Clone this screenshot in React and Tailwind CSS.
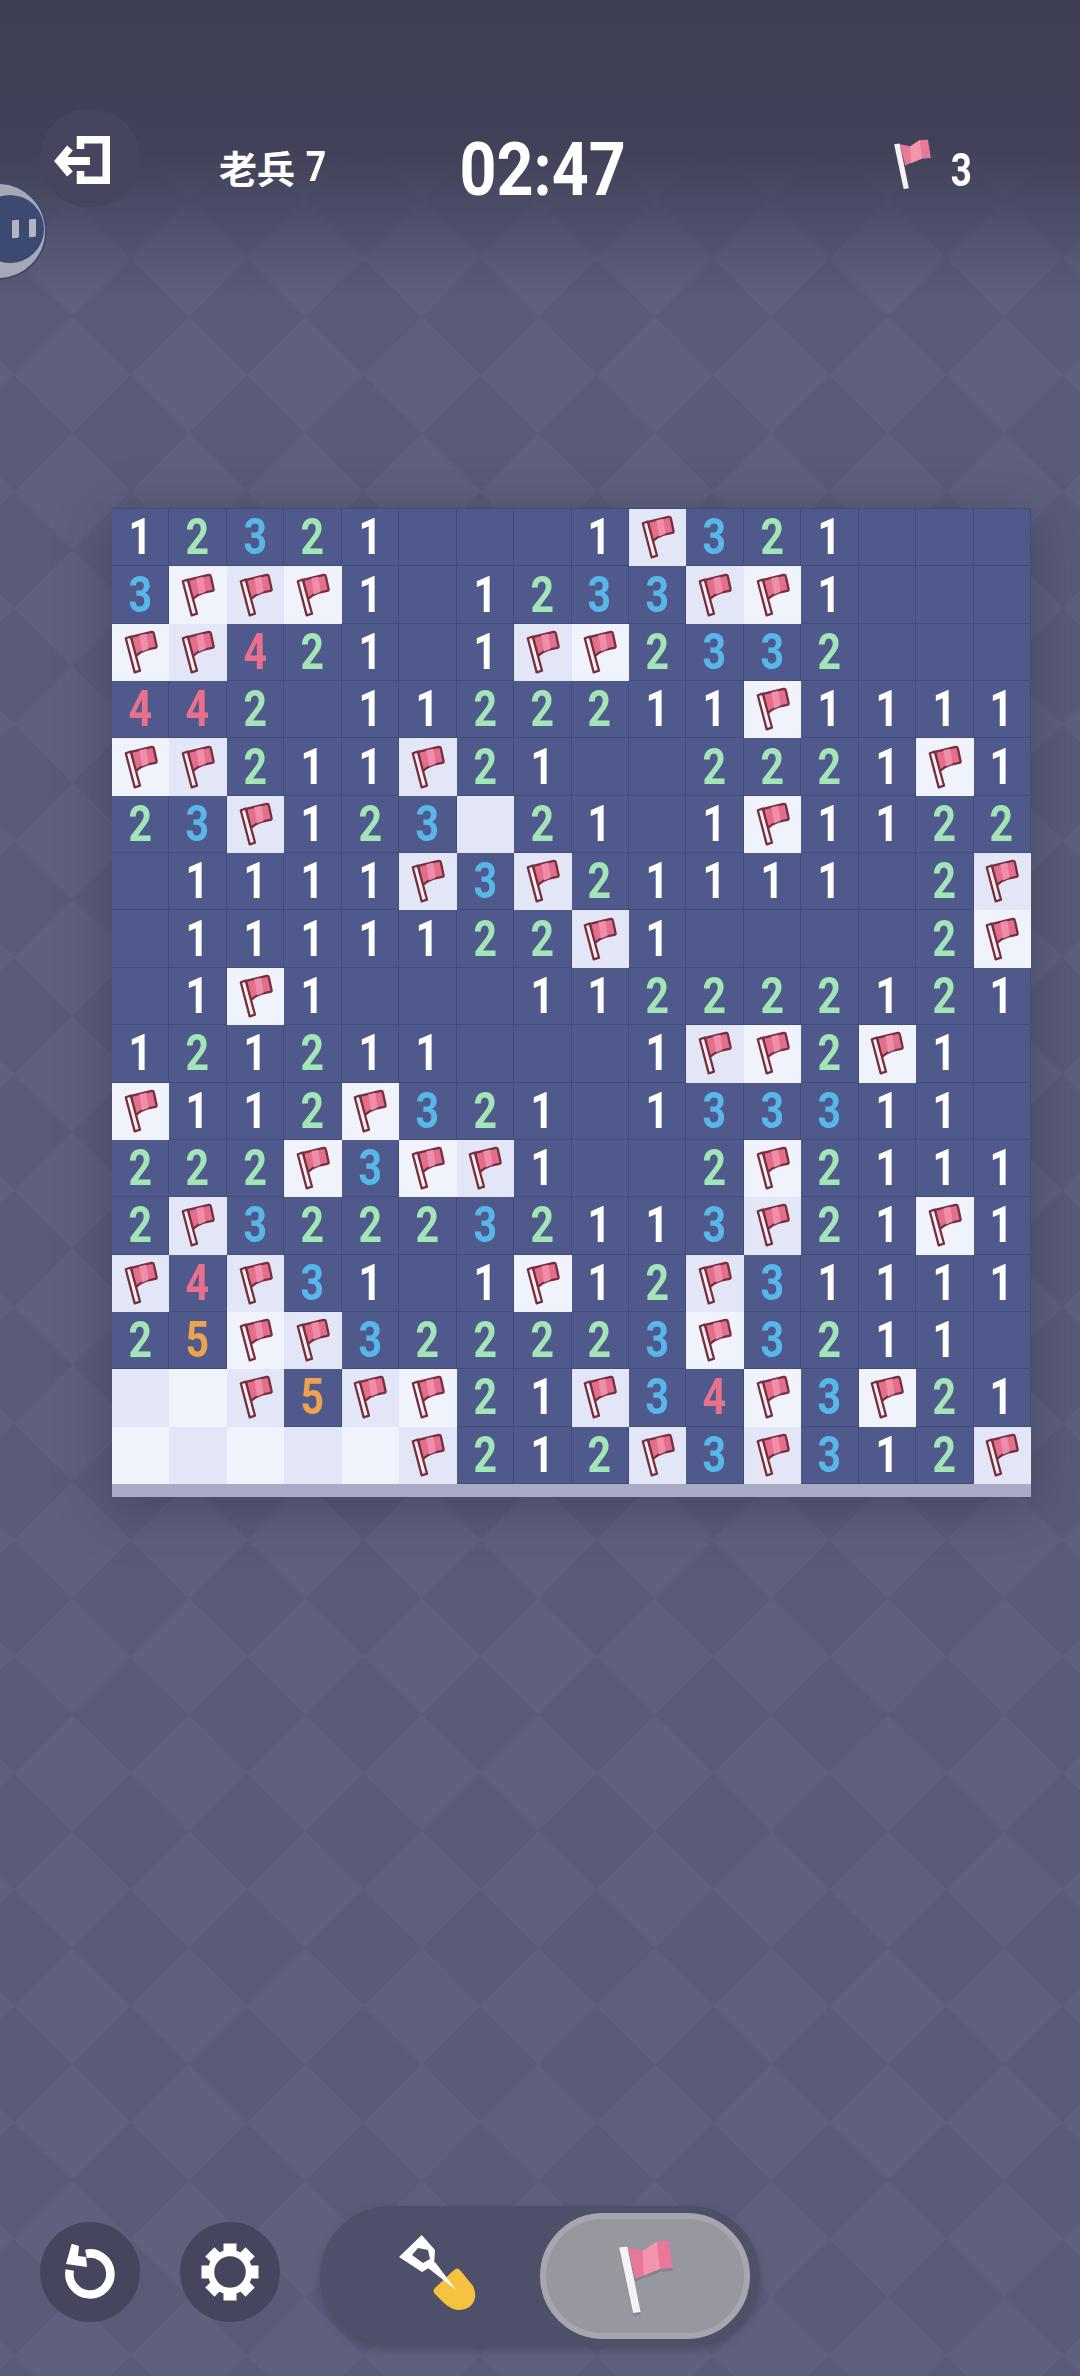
import React from 'react'

const board = [
  '1 2 3 2 1 . . . 1 F 3 2 1 . . .',
  '3 F F F 1 . 1 2 3 3 F F 1 . . .',
  'F F 4 2 1 . 1 F F 2 3 3 2 . . .',
  '4 4 2 . 1 1 2 2 2 1 1 F 1 1 1 1',
  'F F 2 1 1 F 2 1 . . 2 2 2 1 F 1',
  '2 3 F 1 2 3 W 2 1 . 1 F 1 1 2 2',
  '. 1 1 1 1 F 3 F 2 1 1 1 1 . 2 F',
  '. 1 1 1 1 1 2 2 F 1 . . . . 2 F',
  '. 1 F 1 . . . 1 1 2 2 2 2 1 2 1',
  '1 2 1 2 1 1 . . . 1 F F 2 F 1 .',
  'F 1 1 2 F 3 2 1 . 1 3 3 3 1 1 .',
  '2 2 2 F 3 F F 1 . . 2 F 2 1 1 1',
  '2 F 3 2 2 2 3 2 1 1 3 F 2 1 F 1',
  'F 4 F 3 1 . 1 F 1 2 F 3 1 1 1 1',
  '2 5 F F 3 2 2 2 2 3 F 3 2 1 1 .',
  'W W F 5 F F 2 1 F 3 4 F 3 F 2 1',
  'W W W W W F 2 1 2 F 3 F 3 1 2 F',
].map((row) => row.split(' '))

const numberColors = {
  1: 'text-white',
  2: 'text-[#a2e5b6]',
  3: 'text-[#58b7ea]',
  4: 'text-[#e8708c]',
  5: 'text-[#eda24f]',
}

function CellFlag() {
  return (
    <svg viewBox="-4 -4 108 136" className="w-[36px] h-[45px]">
      <path d="M20 17 L48 10 L82 2 Q88 1 89 7 L97 44 Q98 50 93 50 L68 55 L50 63 L32 76 Z" fill="#e46f8d" stroke="#74303f" strokeWidth="7" strokeLinejoin="round" />
      <path d="M45 12 L66 7 L73 53 L53 61 Z" fill="#ef8ea8" />
      <path d="M4 21 L19 16 L47 119 L31 124 Z" fill="#fdeef0" stroke="#74303f" strokeWidth="7" strokeLinejoin="round" />
    </svg>
  )
}

function PlainFlag({ className }) {
  return (
    <svg viewBox="0 0 100 136" className={className}>
      <path d="M16 14 L44 20 L70 3 L92 2 L100 52 L72 54 L44 66 L30 72 Z" fill="#e8789a" />
      <path d="M44 20 L70 3 L76 54 L46 66 Z" fill="#f294ad" />
      <path d="M0 14 L15 12 L40 134 L26 136 Z" fill="#f3f3f6" />
    </svg>
  )
}

function Digit({ value }) {
  return (
    <span className={`inline-block scale-x-[0.82] font-['Roboto',sans-serif] font-bold text-[50px] leading-none ${numberColors[value]}`}>
      {value}
    </span>
  )
}

function Cell({ value, row, col }) {
  const light = (row + col) % 2 === 0
  if (value === 'F' || value === 'W') {
    return (
      <div className={`flex items-center justify-center ${light ? 'bg-[#f0f3fc]' : 'bg-[#e2e6f6]'}`}>
        {value === 'F' && <CellFlag />}
      </div>
    )
  }
  return (
    <div className="flex items-center justify-center border-r border-b border-[#414b7c]">
      {value !== '.' && <Digit value={value} />}
    </div>
  )
}

function PauseBubble() {
  return (
    <div className="absolute left-[-51px] top-[182px] w-[98px] h-[98px] rounded-full bg-[#a6a8b8] border-2 border-[#3f4a70]">
      <div className="absolute left-[25px] top-[11px] w-[68px] h-[68px] rounded-full bg-[#3c4a72] flex items-center justify-center gap-[10px] pl-[28px]">
        <span className="block w-[7px] h-[18px] bg-[#b3b5c2] rounded-[1px] skew-y-[-8deg]" />
        <span className="block w-[7px] h-[18px] bg-[#b3b5c2] rounded-[1px] skew-y-[-8deg] -translate-y-[1px]" />
      </div>
    </div>
  )
}

function Header() {
  return (
    <div className="relative flex items-start h-[100px] mt-[109px] pl-[40px]">
      <div className="flex items-center justify-center w-[100px] h-[98px] rounded-full bg-[#45465d]">
        <svg viewBox="0 0 56 48" className="w-[58px] h-[48px] translate-y-[2px] -translate-x-[8px]" fill="none" stroke="#fff">
          <path d="M26.5 13 V3.75 H52.25 V44.25 H26.5 V35" strokeWidth="7.5" strokeLinecap="butt" />
          <path d="M10 25 H36" strokeWidth="8" />
          <path d="M16 12 L5 25 L16 38" strokeWidth="7.5" />
        </svg>
      </div>
      <div className="flex items-center ml-[79px] h-[40px] mt-[38px] text-white">
        <span className="font-['Noto_Sans_CJK_SC',sans-serif] font-bold text-[38px] leading-none">老兵</span>
        <span className="inline-block ml-[9px] scale-x-[0.85] font-['Roboto',sans-serif] font-bold text-[42px] leading-none">7</span>
      </div>
      <div className="ml-[129px] mt-[23px] w-[170px] flex justify-center text-white">
        <span className="inline-block scale-x-[0.86] font-['Roboto',sans-serif] font-bold text-[75px] leading-none">02:47</span>
      </div>
      <div className="flex items-start ml-[267px] mt-[30px]">
        <PlainFlag className="w-[37px] h-[50px]" />
        <span className="inline-block ml-[17px] mt-[8px] scale-x-[0.8] font-['Roboto',sans-serif] font-bold text-[46px] leading-none text-white">3</span>
      </div>
    </div>
  )
}

function Board() {
  return (
    <div className="ml-[112px] mt-[299px] w-[919px] shadow-[0_10px_50px_rgba(40,40,60,0.42)]">
      <div className="grid grid-cols-[repeat(16,1fr)] grid-rows-[repeat(17,1fr)] w-[919px] h-[976px] bg-[#50598c] border-t border-[#414b7c]">
        {board.map((cells, r) =>
          cells.map((value, c) => <Cell key={`${r}-${c}`} value={value} row={r} col={c} />)
        )}
      </div>
      <div className="h-[13px] bg-[#a8abc3]" />
    </div>
  )
}

function Toolbar() {
  return (
    <div className="flex items-start mt-auto mb-[30px] pl-[40px]">
      <div className="flex items-center justify-center mt-[16px] w-[100px] h-[100px] rounded-full bg-[#45465d]">
        <svg viewBox="0 0 80 80" className="w-[80px] h-[80px] -translate-y-[0px]">
          <path d="M36 21.8 A20.5 20.5 0 1 1 19.8 38" fill="none" stroke="#fff" strokeWidth="8.5" />
          <path d="M21.7 11.7 L16 32 L37 35 L36 25 L28 24 L29 14 Z" fill="#fff" />
        </svg>
      </div>
      <div className="flex items-center justify-center mt-[16px] ml-[40px] w-[100px] h-[100px] rounded-full bg-[#45465d]">
        <svg viewBox="-30 -30 60 60" className="w-[60px] h-[60px]">
          {[0, 45, 90, 135, 180, 225, 270, 315].map((deg) => (
            <rect key={deg} x="-6.5" y="-28.5" width="13" height="12" fill="#fff" transform={`rotate(${deg})`} />
          ))}
          <circle cx="0" cy="0" r="19" fill="none" stroke="#fff" strokeWidth="6.5" />
        </svg>
      </div>
      <div className="flex items-center ml-[40px] w-[440px] h-[140px] rounded-full bg-[#4e4f68] shadow-[0_4px_8px_rgba(50,50,75,0.35)]">
        <div className="flex items-center justify-center w-[220px]">
          <svg viewBox="0 0 110 100" className="w-[110px] h-[100px] translate-x-[5px] -translate-y-[6px]">
            <path d="M74 50 Q77 47 80 50 L93 66 Q96 72 95 78 Q92 90 78 90 Q70 89 63 82 L55 74 Q52 71 55 68 Z" fill="#f5c33f" />
            <path fillRule="evenodd" d="M41.7 15 L55 30 L54 45 L42 52 L19 37 Z M38 28 L32 35 L43 43 L50 39 L48 30 Z" fill="#fff" />
            <path d="M48 48 L55 42 L76 70 Z" fill="#fff" />
          </svg>
        </div>
        <div className="flex items-center justify-center w-[210px] h-[126px] rounded-full bg-[#97979f] border-[6px] border-[#a6a6ae]">
          <PlainFlag className="w-[54px] h-[73px] translate-x-[1px] drop-shadow-[0_3px_0_rgba(0,0,0,0.12)]" />
        </div>
      </div>
    </div>
  )
}

export default function App() {
  return (
    <div className="relative flex flex-col w-[1080px] h-[2376px] overflow-hidden bg-[#5c5d7a] bg-[conic-gradient(from_-45deg_at_50%_50%,#5f607d_25%,#5a5b78_0_50%,#5f607d_0_75%,#5a5b78_0)] bg-[length:116.5px_116.5px] bg-[position:13.75px_25.25px]">
      <div className="absolute inset-x-0 top-0 h-[300px] bg-linear-to-b from-[#3e3f55] via-[#414259] via-50% to-transparent" />
      <Header />
      <PauseBubble />
      <Board />
      <Toolbar />
    </div>
  )
}
